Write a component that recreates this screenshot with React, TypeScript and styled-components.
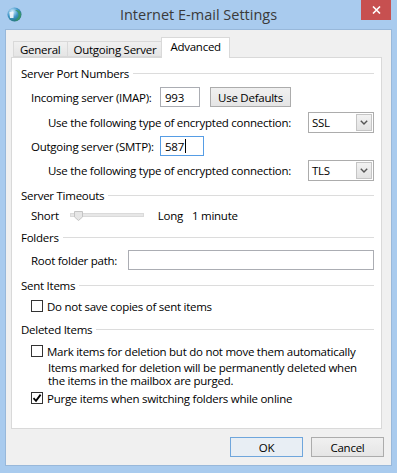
import styled, { createGlobalStyle } from "styled-components";

const GlobalStyle = createGlobalStyle`
  html, body {
    margin: 0;
    padding: 0;
  }
  body {
    font-family: "Open Sans", "Noto Sans", sans-serif;
    font-size: 11.5px;
    letter-spacing: -0.26px;
    color: #000;
  }
  * {
    box-sizing: border-box;
  }
`;

const Frame = styled.div`
  width: 397px;
  height: 473px;
  background: #a9cbee;
  display: flex;
  flex-direction: column;
  padding: 0 5px 7px 5px;
`;

const TitleBar = styled.div`
  height: 29px;
  display: grid;
  grid-template-columns: 1fr auto 1fr;
  align-items: start;
`;

const AppIcon = styled.svg`
  margin: 7px 0 0 2px;
  width: 15px;
  height: 15px;
`;

const Title = styled.div`
  font-size: 14.5px;
  letter-spacing: 0;
  color: #3a3a3a;
  line-height: 29px;
`;

const CloseButton = styled.div`
  justify-self: end;
  margin-right: 1px;
  width: 30px;
  height: 20px;
  background: #c75050;
  display: flex;
  align-items: center;
  justify-content: center;
`;

const Client = styled.div`
  flex: 1;
  background: #f0f0f0;
  border: 1px solid #98b8da;
  padding: 7px 9px 8px 5px;
  display: flex;
  flex-direction: column;
`;

const TabStrip = styled.div`
  display: flex;
  align-items: flex-end;
  height: 20px;
  padding-left: 2px;
  position: relative;
  z-index: 1;
`;

const Tab = styled.div<{ $active?: boolean }>`
  height: ${(p) => (p.$active ? 21 : 16)}px;
  margin-bottom: ${(p) => (p.$active ? -1 : 0)}px;
  margin-left: ${(p) => (p.$active ? -2 : -1)}px;
  padding: ${(p) => (p.$active ? "1px 8px 0" : "0 6px")};
  border: 1px solid #d9d9d9;
  border-bottom: ${(p) => (p.$active ? "none" : "1px solid #d9d9d9")};
  background: ${(p) => (p.$active ? "#fff" : "linear-gradient(#f0f0f0, #e5e5e5)")};
  line-height: ${(p) => (p.$active ? 16 : 15)}px;
  white-space: nowrap;
  &:first-child {
    margin-left: 0;
  }
`;

const Panel = styled.div`
  flex: 1;
  background: #fff;
  border: 1px solid #d9d9d9;
  padding: 7px 7px 0 9px;
  display: flex;
  flex-direction: column;
`;

const GroupHeader = styled.div<{ $mt: number }>`
  margin-top: ${(p) => p.$mt}px;
  height: 16px;
  display: flex;
  align-items: center;
  white-space: nowrap;
  &::after {
    content: "";
    flex: 1;
    height: 1px;
    margin-left: 4px;
    background: #dcdcdc;
  }
`;

const Row = styled.div<{ $mt: number; $indent?: number; $h?: number }>`
  margin-top: ${(p) => p.$mt}px;
  padding-left: ${(p) => p.$indent ?? 10}px;
  height: ${(p) => p.$h ?? 20}px;
  display: flex;
  align-items: center;
  white-space: nowrap;
`;

const FieldLabel = styled.span<{ $w: number }>`
  width: ${(p) => p.$w}px;
  flex-shrink: 0;
`;

const TextBox = styled.div<{ $w?: number; $focused?: boolean }>`
  width: ${(p) => (p.$w ? `${p.$w}px` : "auto")};
  flex: ${(p) => (p.$w ? "none" : "1")};
  height: 100%;
  border: 1px solid ${(p) => (p.$focused ? "#569de5" : "#abadb3")};
  background: #fff;
  padding-left: 4px;
  display: flex;
  align-items: center;
`;

const Caret = styled.span`
  width: 1px;
  height: 14px;
  background: #000;
  margin-left: 1px;
`;

const Button = styled.div<{ $w: number; $default?: boolean }>`
  width: ${(p) => p.$w}px;
  height: 20px;
  border: 1px solid ${(p) => (p.$default ? "#6fa6dc" : "#acacac")};
  background: ${(p) => (p.$default ? "#e8eef4" : "linear-gradient(#f0f0f0, #e5e5e5)")};
  display: flex;
  align-items: center;
  justify-content: center;
`;

const Select = styled.div`
  margin-left: auto;
  width: 66px;
  height: 21px;
  border: 1px solid #acacac;
  background: #fff;
  display: flex;
  align-items: center;
  padding: 1px 1px 1px 3px;
`;

const SelectValue = styled.span`
  flex: 1;
`;

const ArrowBox = styled.div`
  width: 16px;
  height: 17px;
  border: 1px solid #c5c5c5;
  background: linear-gradient(#f2f2f2, #e2e2e2);
  display: flex;
  align-items: center;
  justify-content: center;
`;

const SliderTrack = styled.div`
  position: relative;
  width: 74px;
  height: 4px;
  margin: 0 14px 0 11px;
  background: #e7e7e7;
  border: 1px solid #dadada;
`;

const SliderThumb = styled.svg`
  position: absolute;
  left: 3px;
  top: -3px;
`;

const Gap = styled.span<{ $w: number }>`
  width: ${(p) => p.$w}px;
  flex-shrink: 0;
`;

const CheckBox = styled.div`
  width: 12px;
  height: 12px;
  border: 1px solid #333;
  background: #fff;
  margin-right: 4px;
  display: flex;
  align-items: center;
  justify-content: center;
`;

const Note = styled.div`
  margin-top: 2px;
  padding-left: 27px;
  display: flex;
  flex-direction: column;
`;

const NoteLine = styled.div`
  height: 13px;
  line-height: 13px;
  white-space: nowrap;
`;

const Footer = styled.div`
  margin: 8px -2px 0 0;
  display: flex;
  justify-content: flex-end;
  gap: 8px;
`;

const Check = ({ checked }: { checked?: boolean }) => (
  <CheckBox>
    {checked && (
      <svg width="10" height="10" viewBox="0 0 10 10">
        <path d="M1.5 5.2 L4 7.8 L8.6 1.6" fill="none" stroke="#000" strokeWidth="1.8" />
      </svg>
    )}
  </CheckBox>
);

const Dropdown = ({ value }: { value: string }) => (
  <Select>
    <SelectValue>{value}</SelectValue>
    <ArrowBox>
      <svg width="8" height="5" viewBox="0 0 8 5">
        <path d="M0.8 0.8 L4 4 L7.2 0.8" fill="none" stroke="#555" strokeWidth="1.4" />
      </svg>
    </ArrowBox>
  </Select>
);

const App = () => {
  return (
    <>
      <GlobalStyle />
      <Frame>
        <TitleBar>
          <AppIcon viewBox="0 0 15 15">
            <defs>
              <radialGradient id="globe" cx="0.35" cy="0.3" r="0.8">
                <stop offset="0" stopColor="#d8f0ff" />
                <stop offset="0.5" stopColor="#3f95c8" />
                <stop offset="1" stopColor="#1c6f6a" />
              </radialGradient>
            </defs>
            <circle cx="7.5" cy="7.5" r="7" fill="url(#globe)" />
            <path d="M8 3 C10 4 12 6 11.5 9 C10.5 11 9 12.5 8.5 14 C11.5 13.5 14 11 14 7.5 C14 5 12 3 8 3 Z" fill="#3d9a62" opacity="0.8" />
            <path d="M2.5 5 L6.5 5 L6.5 11 L3 11 Z" fill="#f4f7fb" opacity="0.9" />
          </AppIcon>
          <Title>Internet E-mail Settings</Title>
          <CloseButton>
            <svg width="9" height="8" viewBox="0 0 9 8">
              <path d="M1 0.5 L8 7.5 M8 0.5 L1 7.5" stroke="#fff" strokeWidth="1.6" />
            </svg>
          </CloseButton>
        </TitleBar>

        <Client>
          <TabStrip>
            <Tab>General</Tab>
            <Tab>Outgoing Server</Tab>
            <Tab $active>Advanced</Tab>
          </TabStrip>

          <Panel>
            <GroupHeader $mt={0}>Server Port Numbers</GroupHeader>
            <Row $mt={6}>
              <FieldLabel $w={129}>Incoming server (IMAP):</FieldLabel>
              <TextBox $w={40}>993</TextBox>
              <Gap $w={10} />
              <Button $w={81}>Use Defaults</Button>
            </Row>
            <Row $mt={5} $h={21} $indent={27}>
              Use the following type of encrypted connection:
              <Dropdown value="SSL" />
            </Row>
            <Row $mt={3}>
              <FieldLabel $w={129}>Outgoing server (SMTP):</FieldLabel>
              <TextBox $w={44} $focused>
                587
                <Caret />
              </TextBox>
            </Row>
            <Row $mt={4} $h={21} $indent={27}>
              Use the following type of encrypted connection:
              <Dropdown value="TLS" />
            </Row>

            <GroupHeader $mt={6}>Server Timeouts</GroupHeader>
            <Row $mt={4} $h={16}>
              Short
              <SliderTrack>
                <SliderThumb width="9" height="10" viewBox="0 0 9 10">
                  <path d="M0.5 0.5 H8.5 V6 L4.5 9.5 L0.5 6 Z" fill="#e6e6e6" stroke="#c4c4c4" />
                </SliderThumb>
              </SliderTrack>
              Long
              <Gap $w={9} />1 minute
            </Row>

            <GroupHeader $mt={6}>Folders</GroupHeader>
            <Row $mt={5}>
              <FieldLabel $w={97}>Root folder path:</FieldLabel>
              <TextBox />
            </Row>

            <GroupHeader $mt={7}>Sent Items</GroupHeader>
            <Row $mt={5} $h={16}>
              <Check />
              Do not save copies of sent items
            </Row>

            <GroupHeader $mt={7}>Deleted Items</GroupHeader>
            <Row $mt={6} $h={16}>
              <Check />
              Mark items for deletion but do not move them automatically
            </Row>
            <Note>
              <NoteLine>Items marked for deletion will be permanently deleted when</NoteLine>
              <NoteLine>the items in the mailbox are purged.</NoteLine>
            </Note>
            <Row $mt={3} $h={16}>
              <Check checked />
              Purge items when switching folders while online
            </Row>
          </Panel>

          <Footer>
            <Button $w={73} $default>
              OK
            </Button>
            <Button $w={73}>Cancel</Button>
          </Footer>
        </Client>
      </Frame>
    </>
  );
};

export default App;
